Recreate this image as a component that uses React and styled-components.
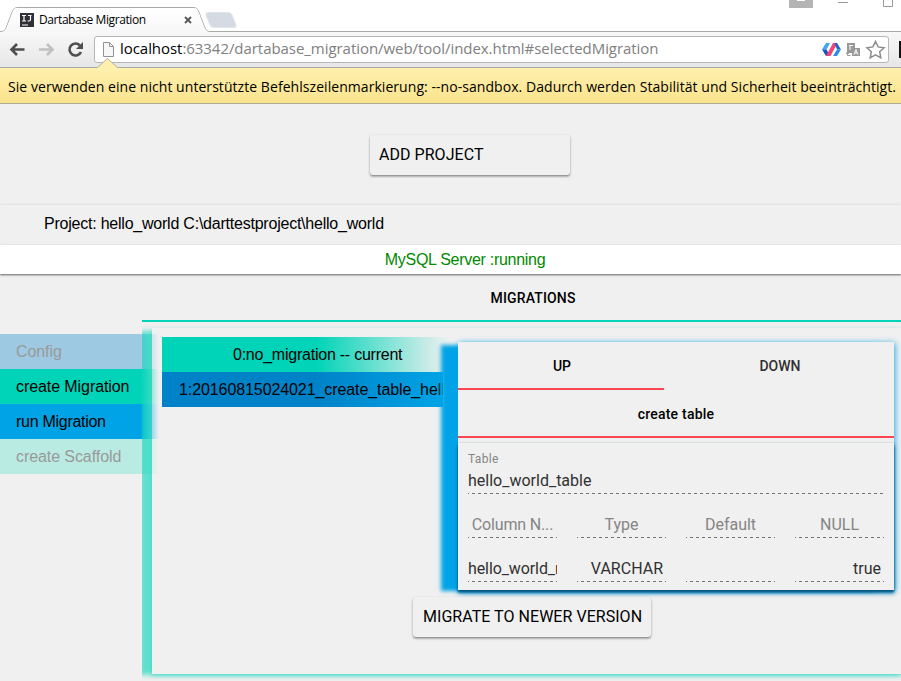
import React from "react";
import styled, { createGlobalStyle } from "styled-components";

const TEAL = "#00d4b8";
const BLUE = "#00a4e6";
const RED = "#ff4550";

const GlobalStyle = createGlobalStyle`
  * { box-sizing: border-box; }
  body { margin: 0; background: #f0f0f0; overflow: hidden; }
`;

const Window = styled.div`
  width: 901px;
  height: 681px;
  overflow: hidden;
  background: #f0f0f0;
  color: #000;
  font-family: "Liberation Sans", Arial, sans-serif;
  font-size: 16px;
  white-space: nowrap;
`;

/* Browser chrome */
const TabStrip = styled.div`
  position: relative;
  display: flex;
  height: 32px;
  background: #fff;
`;
const TabArt = styled.svg`
  position: absolute;
  inset: 0;
`;
const Tab = styled.div`
  position: relative;
  display: flex;
  align-items: center;
  width: 200px;
  height: 24px;
  margin-top: 8px;
  padding-left: 20px;
`;
const TabTitle = styled.span`
  margin-left: 5px;
  width: 144px;
  font: 12px/24px "Open Sans", sans-serif;
  letter-spacing: -0.42px;
`;
const Toolbar = styled.div`
  display: flex;
  align-items: flex-start;
  height: 36px;
  padding-top: 4px;
  background: linear-gradient(#f8f8f8, #e6e6e6);
  border-bottom: 1px solid #a9a9a9;
`;
const NavIcons = styled.svg`
  width: 94px;
  height: 28px;
  flex: none;
`;
const Address = styled.div`
  display: flex;
  align-items: center;
  width: 795px;
  height: 27px;
  padding-left: 7px;
  background: #fff;
  border: 1px solid #b7b7b7;
  border-radius: 3px;
`;
const Url = styled.span`
  width: 702px;
  margin-left: 5px;
  padding-bottom: 2px;
  color: #808080;
  font: 15px/23px "Open Sans", sans-serif;
  letter-spacing: -0.05px;
`;
const Host = styled.span`
  color: #000;
`;
const Extension = styled.div`
  width: 2px;
  height: 17px;
  margin: 5px 0 0 10px;
  background: #111;
`;
const InfoBar = styled.div`
  position: relative;
  height: 36px;
  padding-left: 8px;
  background: linear-gradient(#fff0ae, #f9e38c);
  border-bottom: 1px solid #b0aa92;
  font: 14px/37px "Open Sans", sans-serif;
  letter-spacing: 0.055px;
`;
const Notch = styled.svg`
  position: absolute;
  left: 97px;
  top: -10px;
`;

/* Page */
const Button = styled.div`
  display: flex;
  align-items: center;
  width: ${(p) => p.$width}px;
  height: 40px;
  padding: 0 0 1px ${(p) => p.$indent}px;
  border-radius: 3px;
  background: #f0f0f0;
  box-shadow: 0 2px 2px rgba(0,0,0,.2), 0 1px 3px rgba(0,0,0,.2), 0 1px 1px rgba(0,0,0,.1);
  font: 16px "Roboto", sans-serif;
  letter-spacing: 0.04px;
`;
const AddRow = styled.div`
  height: 101px;
  padding: 31px 0 0 370px;
`;
const ProjectBar = styled.div`
  height: 40px;
  padding-left: 44px;
  line-height: 38px;
  letter-spacing: -0.225px;
  box-shadow: 0 0 3px rgba(0,0,0,.12);
`;
const StatusBar = styled.div`
  position: relative;
  height: 29px;
  padding-left: 29px;
  background: #fff;
  color: #008a00;
  line-height: 29px;
  letter-spacing: -0.29px;
  text-align: center;
  box-shadow: 0 1px 2px rgba(0,0,0,.6);
`;
const Heading = styled.div`
  width: 782px;
  height: 48px;
  margin-left: 142px;
  border-bottom: 2px solid ${TEAL};
  font: 500 14px/48px "Roboto", sans-serif;
  letter-spacing: 0.15px;
  text-align: center;
`;
const Body = styled.div`
  display: flex;
  height: 359px;
`;
const Sidebar = styled.div`
  flex: none;
  width: 160px;
  margin-right: -18px;
  padding-top: 12px;
`;
const MenuItem = styled.div`
  height: 35px;
  padding-left: 16px;
  line-height: 35px;
  letter-spacing: ${(p) => p.$track || -0.08}px;
  color: ${(p) => (p.$off ? "#999" : "#000")};
  background: linear-gradient(
    to right,
    rgb(${(p) => p.$rgb}) 141px,
    rgba(${(p) => p.$rgb}, 0.35) 152px,
    rgba(${(p) => p.$rgb}, 0) 159px
  );
`;
const Clip = styled.div`
  flex: none;
  width: 759px;
  overflow: hidden;
  padding: 6px 0 0 10px;
`;
const Panel = styled.div`
  width: 762px;
  height: 346px;
  padding: 9px 0 0 10px;
  box-shadow: -14px 2px 5px -1px rgba(0,212,184,.6), 0 2px 4px rgba(0,212,184,.4);
`;
const Columns = styled.div`
  display: flex;
  align-items: flex-start;
`;
const List = styled.div`
  width: 296px;
`;
const ListItem = styled.div`
  width: ${(p) => p.$width}px;
  height: 35px;
  padding-left: ${(p) => p.$indent}px;
  overflow: hidden;
  line-height: 35px;
  letter-spacing: ${(p) => p.$track}px;
  background: linear-gradient(to right, ${(p) => p.$from} 155px, ${(p) => p.$to} 100%);
`;
const Detail = styled.div`
  position: relative;
  z-index: 1;
  width: 436px;
  height: 248px;
  margin-top: 5px;
  background: #f0f0f0;
  font-family: "Roboto", sans-serif;
  box-shadow: -18px 2px 4px -1px ${BLUE}, 1px 1px 6px rgba(0,164,230,.9);
`;
const Tabs = styled.div`
  display: flex;
  height: 48px;
`;
const DetailTab = styled.div`
  width: ${(p) => p.$width}px;
  padding-left: 2px;
  border-bottom: 2px solid ${(p) => (p.$active ? RED : "transparent")};
  color: ${(p) => (p.$active ? "#000" : "#303030")};
  font-size: 14px;
  font-weight: 500;
  line-height: 48px;
  text-align: center;
`;
const Action = styled.div`
  height: 48px;
  border-bottom: 2px solid ${RED};
  font-size: 14px;
  font-weight: 500;
  line-height: 49px;
  letter-spacing: 0.22px;
  text-align: center;
`;
const Form = styled.div`
  height: 147px;
  margin-top: 5px;
  padding: 9px 10px 0;
  box-shadow: 0 2px 2px rgba(0,70,105,.75), 0 3px 4px rgba(0,120,180,.95), 0 0 2px rgba(0,0,0,.12);
`;
const Label = styled.div`
  height: 18px;
  color: #858585;
  font-size: 12px;
  line-height: 14px;
  letter-spacing: 0.3px;
`;
const Grid = styled.div`
  display: grid;
  grid-template-columns: repeat(4, 89px);
  column-gap: 20px;
  padding-top: 20px;
`;
const Field = styled.div`
  height: 24px;
  overflow: hidden;
  padding: 0 ${(p) => p.$pad || 0}px;
  color: ${(p) => (p.$muted ? "#858585" : "#303030")};
  font-size: 16px;
  line-height: 21px;
  text-align: ${(p) => p.$align || "left"};
  letter-spacing: ${(p) => p.$track || 0}px;
  background: repeating-linear-gradient(to right, #757575 0 3px, transparent 3px 6px) -2px 100% / 480px 1px no-repeat;
`;
const MigrateRow = styled.div`
  padding: 7px 0 0 251px;
`;

const columnNames = [
  { text: "Column N...", track: -0.15 },
  { text: "Type" },
  { text: "Default" },
  { text: "NULL" },
];
const columnValues = [
  { text: "hello_world_name", track: -0.1 },
  { text: "VARCHAR", align: "right", pad: 3 },
  { text: "" },
  { text: "true", align: "right", pad: 3 },
];

function BrowserTabs() {
  return (
    <TabStrip>
      <TabArt width="901" height="32">
        <defs>
          <linearGradient id="tab" x2="0" y2="1">
            <stop stopColor="#fff" />
            <stop offset="1" stopColor="#f7f7f7" />
          </linearGradient>
        </defs>
        <path d="M0 31.5H2Q5 31 6 28L12.5 11Q14 7.5 17 7.5H194Q197 7.5 198.500 11L205 28Q206.500 31.500 209 31.500H901" fill="none" stroke="#aaa" />
        <path d="M2 32Q5 31 6.500 28L13 11Q14 8 17 8H194Q197 8 198 11L204.500 28Q206 31 209 32Z" fill="url(#tab)" />
        <path d="M208 12.500H229Q231 12.500 232 15L236 25Q237 27.500 234 27.500H214Q211 27.500 210 25L206 15Q205 12.500 208 12.500Z" fill="#d5dbe3" stroke="#e1e5ea" />
        <path d="M789 0h24v8h-24z" fill="#b4b4b4" />
        <path d="M797 0h8v1h-8z" fill="#fff" />
        <path d="M838 2.500h10M883.500 0v6.500h9V0" fill="none" stroke="#999" />
      </TabArt>
      <Tab>
        <svg width="14" height="14">
          <path d="M0 0h14v14H0z" fill="#303036" />
          <path d="M2 2.500h4M4 2v6M2 8h4M8 2.500h3.500M10.500 2v4.500Q10.500 8 9 8H7.500M2 12h6" fill="none" stroke="#fff" strokeWidth="1.200" />
        </svg>
        <TabTitle>Dartabase Migration</TabTitle>
        <svg width="10" height="10">
          <path d="M2 2l6 6M8 2l-6 6" stroke="#555" strokeWidth="1.800" />
        </svg>
      </Tab>
    </TabStrip>
  );
}

function BrowserToolbar() {
  return (
    <Toolbar>
      <NavIcons viewBox="0 36 94 28">
        <path d="M24.500 49.500H12M17 44l-5.500 5.500L17 55" fill="none" stroke="#4e4e4e" strokeWidth="2.600" />
        <path d="M39 49.500h12.500M47 44l5.500 5.500L47 55" fill="none" stroke="#c0c0c0" strokeWidth="2.600" />
        <path d="M80 45.500A6 6 0 1 0 81 52" fill="none" stroke="#4e4e4e" strokeWidth="2.600" />
        <path d="M83 42v7h-7z" fill="#4e4e4e" />
      </NavIcons>
      <Address>
        <svg width="13" height="17">
          <path d="M1.500 1.500h6L11.500 5.500v10h-10zM7.500 1.500v4h4" fill="#f7f7f7" stroke="#929292" />
        </svg>
        <Url>
          <Host>localhost</Host>:63342/dartabase_migration/web/tool/index.html#selectedMigration
        </Url>
        <svg width="64" height="20" viewBox="822 40 64 20">
          <path d="M826 43h4l-3.500 6.500h-4.500z" fill="#3fa4f4" />
          <path d="M822 49.500h4.500l3.500 6.500h-4z" fill="#1558b8" />
          <path d="M833 43h4.500l-7 13h-4.500z" fill="#f0447a" />
          <path d="M834.500 43h2.500l4 6.500h-4z" fill="#1c62c8" />
          <path d="M837 49.500h4l-4 6.500h-4z" fill="#2c8cec" />
          <path d="M847 43h8v5h-3v5h-5z" fill="#999" />
          <path d="M852 48h8v8h-8z" fill="#999" />
          <path d="M849 45.500h4M850 45v5M854 54.500l2-5 2 5M855 53h2" fill="none" stroke="#fff" />
          <path d="M847.500 52v3.500h3M846 54l1.500-2 1.500 2" fill="none" stroke="#999" />
          <path d="M875.500 41.500l2.600 5.400 6 .800-4.400 4.100 1.100 6-5.300-2.900-5.300 2.900 1.100-6-4.400-4.100 6-.800z" fill="#fff" stroke="#8c8c8c" strokeWidth="1.500" />
        </svg>
      </Address>
      <Extension />
    </Toolbar>
  );
}

export default function App() {
  return (
    <Window>
      <GlobalStyle />
      <BrowserTabs />
      <BrowserToolbar />
      <InfoBar>
        <Notch width="22" height="11">
          <path d="M0 10L10.500 0.500 21 10v1H0z" fill="#fff0ae" />
          <path d="M0.500 9.500L10.500 0.500 20.500 9.500" fill="none" stroke="#b5ae93" />
        </Notch>
        Sie verwenden eine nicht unterstützte Befehlszeilenmarkierung: --no-sandbox. Dadurch werden Stabilität und Sicherheit beeinträchtigt.
      </InfoBar>
      <AddRow>
        <Button $width={200} $indent={9}>ADD PROJECT</Button>
      </AddRow>
      <ProjectBar>Project: hello_world C:\darttestproject\hello_world</ProjectBar>
      <StatusBar>MySQL Server :running</StatusBar>
      <Heading>MIGRATIONS</Heading>
      <Body>
        <Sidebar>
          <MenuItem $rgb="158,201,226" $off>Config</MenuItem>
          <MenuItem $rgb="0,212,184">create Migration</MenuItem>
          <MenuItem $rgb="0,164,230" $track={-0.28}>run Migration</MenuItem>
          <MenuItem $rgb="185,235,226" $off>create Scaffold</MenuItem>
        </Sidebar>
        <Clip>
          <Panel>
            <Columns>
              <List>
                <ListItem $width={288} $indent={71} $track={-0.235} $from={TEAL} $to="rgba(0,212,184,0)">
                  0:no_migration -- current
                </ListItem>
                <ListItem $width={281} $indent={17} $track={-0.09} $from="#0082c8" $to={BLUE}>
                  1:20160815024021_create_table_hello_world
                </ListItem>
              </List>
              <Detail>
                <Tabs>
                  <DetailTab $width={206} $active>UP</DetailTab>
                  <DetailTab $width={230}>DOWN</DetailTab>
                </Tabs>
                <Action>create table</Action>
                <Form>
                  <Label>Table</Label>
                  <Field>hello_world_table</Field>
                  <Grid>
                    {columnNames.map((c) => (
                      <Field key={c.text} $muted $align="center" $track={c.track}>{c.text}</Field>
                    ))}
                  </Grid>
                  <Grid>
                    {columnValues.map((c, i) => (
                      <Field key={i} $align={c.align} $pad={c.pad} $track={c.track}>{c.text}</Field>
                    ))}
                  </Grid>
                </Form>
              </Detail>
            </Columns>
            <MigrateRow>
              <Button $width={238} $indent={10}>MIGRATE TO NEWER VERSION</Button>
            </MigrateRow>
          </Panel>
        </Clip>
      </Body>
    </Window>
  );
}
